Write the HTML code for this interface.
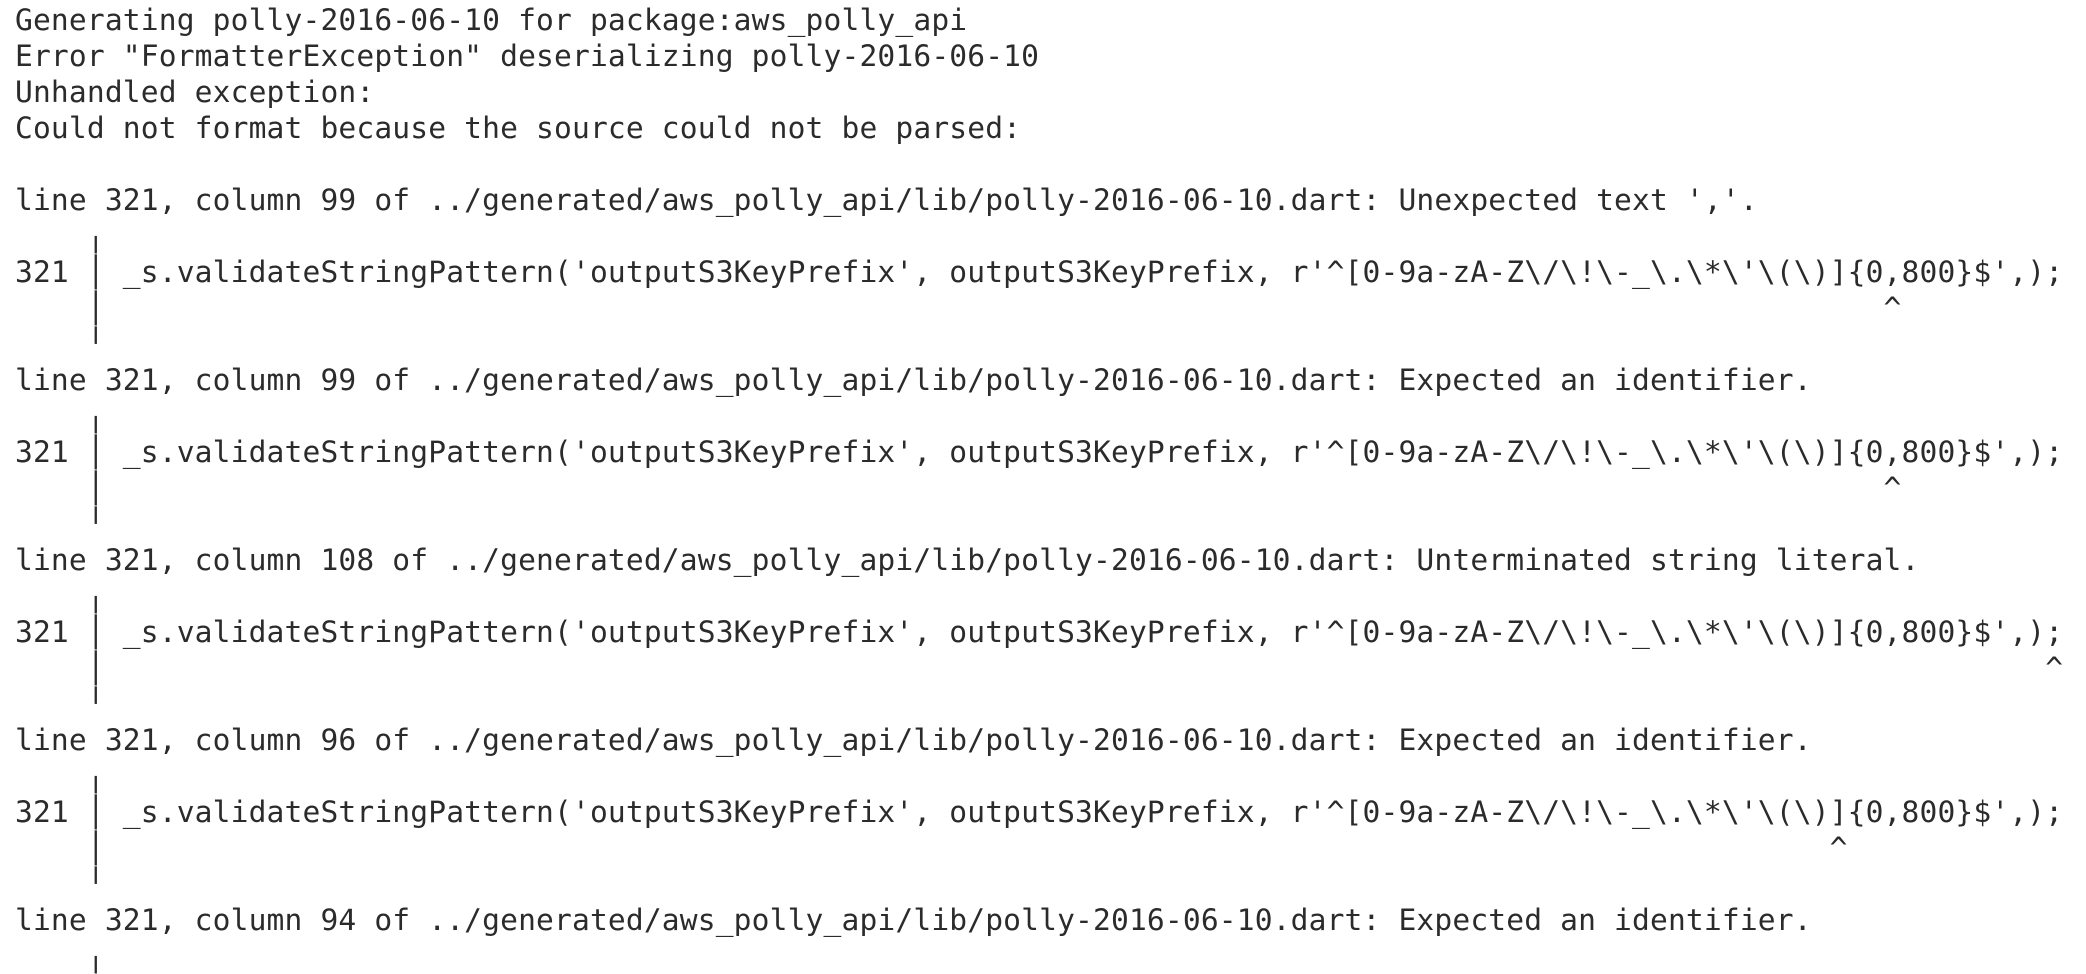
<!DOCTYPE html>
<html><head><meta charset="utf-8"><style>
html,body{margin:0;padding:0;background:#fff;width:2086px;height:962px;overflow:hidden}
pre{margin:0;position:absolute;left:15px;top:2px;font-family:"DejaVu Sans Mono","Liberation Mono",monospace;font-size:29.6px;letter-spacing:0.15px;line-height:36px;color:#2b2b2b;white-space:pre}
</style></head><body><pre>Generating polly-2016-06-10 for package:aws_polly_api
Error "FormatterException" deserializing polly-2016-06-10
Unhandled exception:
Could not format because the source could not be parsed:

line 321, column 99 of ../generated/aws_polly_api/lib/polly-2016-06-10.dart: Unexpected text ','.
    ╷
321 │ _s.validateStringPattern('outputS3KeyPrefix', outputS3KeyPrefix, r'^[0-9a-zA-Z\/\!\-_\.\*\'\(\)]{0,800}$',);
    │                                                                                                   ^
    ╵
line 321, column 99 of ../generated/aws_polly_api/lib/polly-2016-06-10.dart: Expected an identifier.
    ╷
321 │ _s.validateStringPattern('outputS3KeyPrefix', outputS3KeyPrefix, r'^[0-9a-zA-Z\/\!\-_\.\*\'\(\)]{0,800}$',);
    │                                                                                                   ^
    ╵
line 321, column 108 of ../generated/aws_polly_api/lib/polly-2016-06-10.dart: Unterminated string literal.
    ╷
321 │ _s.validateStringPattern('outputS3KeyPrefix', outputS3KeyPrefix, r'^[0-9a-zA-Z\/\!\-_\.\*\'\(\)]{0,800}$',);
    │                                                                                                            ^
    ╵
line 321, column 96 of ../generated/aws_polly_api/lib/polly-2016-06-10.dart: Expected an identifier.
    ╷
321 │ _s.validateStringPattern('outputS3KeyPrefix', outputS3KeyPrefix, r'^[0-9a-zA-Z\/\!\-_\.\*\'\(\)]{0,800}$',);
    │                                                                                                ^
    ╵
line 321, column 94 of ../generated/aws_polly_api/lib/polly-2016-06-10.dart: Expected an identifier.
    ╷
</pre></body></html>
